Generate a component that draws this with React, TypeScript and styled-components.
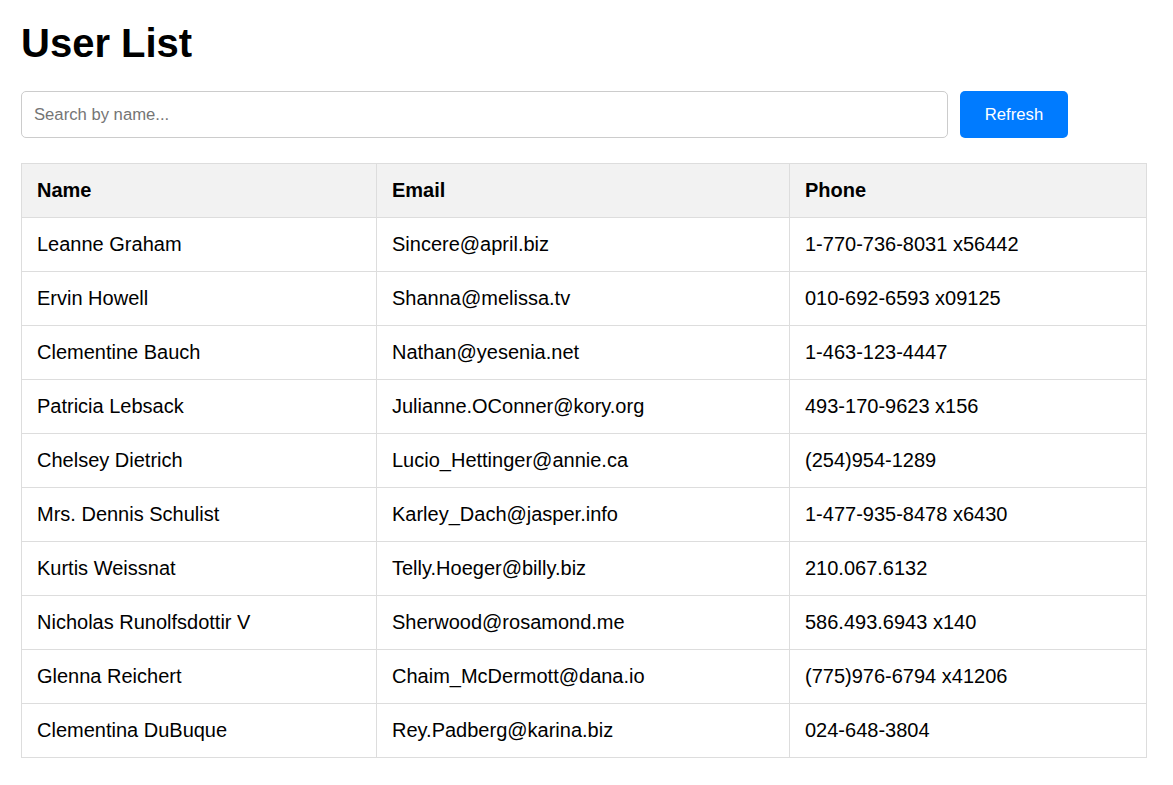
import React, { useState } from "react";
import styled, { createGlobalStyle } from "styled-components";

const GlobalStyle = createGlobalStyle`
  html, body { margin: 0; padding: 0; background: #ffffff; }
  body { font-family: "Liberation Sans", Arial, sans-serif; color: #000; }
`;

const Page = styled.div`
  padding: 20px 27px 20px 21px;
  font-family: "Liberation Sans", Arial, sans-serif;
`;

const Title = styled.h1`
  margin: 0;
  font-size: 40px;
  line-height: 46px;
  font-weight: bold;
`;

const Toolbar = styled.div`
  display: flex;
  gap: 12px;
  margin-top: 25px;
  height: 47px;
`;

const SearchInput = styled.input`
  box-sizing: border-box;
  width: 927px;
  height: 47px;
  padding: 0 12px;
  border: 1px solid #cccccc;
  border-radius: 5px;
  font-family: "Liberation Sans", Arial, sans-serif;
  font-size: 16.67px;
  outline: none;
  &::placeholder { color: #757575; }
`;

const RefreshButton = styled.button`
  box-sizing: border-box;
  width: 108px;
  height: 47px;
  border: none;
  border-radius: 5px;
  background: #007bff;
  color: #ffffff;
  font-family: "Liberation Sans", Arial, sans-serif;
  font-size: 16.67px;
  cursor: pointer;
`;

const Table = styled.table`
  margin-top: 25px;
  width: 1125px;
  table-layout: fixed;
  border-collapse: collapse;
  font-size: 20px;
`;

const HeadCell = styled.th`
  height: 53px;
  padding: 0 15px;
  border: 1px solid #dddddd;
  background: #f2f2f2;
  text-align: left;
  font-weight: bold;
`;

const Cell = styled.td`
  height: 53px;
  padding: 0 15px;
  border: 1px solid #dddddd;
  text-align: left;
`;

const users = [
  ["Leanne Graham", "Sincere@april.biz", "1-770-736-8031 x56442"],
  ["Ervin Howell", "Shanna@melissa.tv", "010-692-6593 x09125"],
  ["Clementine Bauch", "Nathan@yesenia.net", "1-463-123-4447"],
  ["Patricia Lebsack", "Julianne.OConner@kory.org", "493-170-9623 x156"],
  ["Chelsey Dietrich", "Lucio_Hettinger@annie.ca", "(254)954-1289"],
  ["Mrs. Dennis Schulist", "Karley_Dach@jasper.info", "1-477-935-8478 x6430"],
  ["Kurtis Weissnat", "Telly.Hoeger@billy.biz", "210.067.6132"],
  ["Nicholas Runolfsdottir V", "Sherwood@rosamond.me", "586.493.6943 x140"],
  ["Glenna Reichert", "Chaim_McDermott@dana.io", "(775)976-6794 x41206"],
  ["Clementina DuBuque", "Rey.Padberg@karina.biz", "024-648-3804"],
];

export default function App() {
  const [query, setQuery] = useState("");
  const filtered = users.filter((u) => u[0].toLowerCase().includes(query.toLowerCase()));
  return (
    <Page>
      <GlobalStyle />
      <Title>User List</Title>
      <Toolbar>
        <SearchInput
          placeholder="Search by name..."
          value={query}
          onChange={(e) => setQuery(e.target.value)}
        />
        <RefreshButton>Refresh</RefreshButton>
      </Toolbar>
      <Table>
        <colgroup>
          <col style={{ width: 355 }} />
          <col style={{ width: 413 }} />
          <col style={{ width: 357 }} />
        </colgroup>
        <thead>
          <tr>
            <HeadCell>Name</HeadCell>
            <HeadCell>Email</HeadCell>
            <HeadCell>Phone</HeadCell>
          </tr>
        </thead>
        <tbody>
          {filtered.map((u) => (
            <tr key={u[1]}>
              <Cell>{u[0]}</Cell>
              <Cell>{u[1]}</Cell>
              <Cell>{u[2]}</Cell>
            </tr>
          ))}
        </tbody>
      </Table>
    </Page>
  );
}
